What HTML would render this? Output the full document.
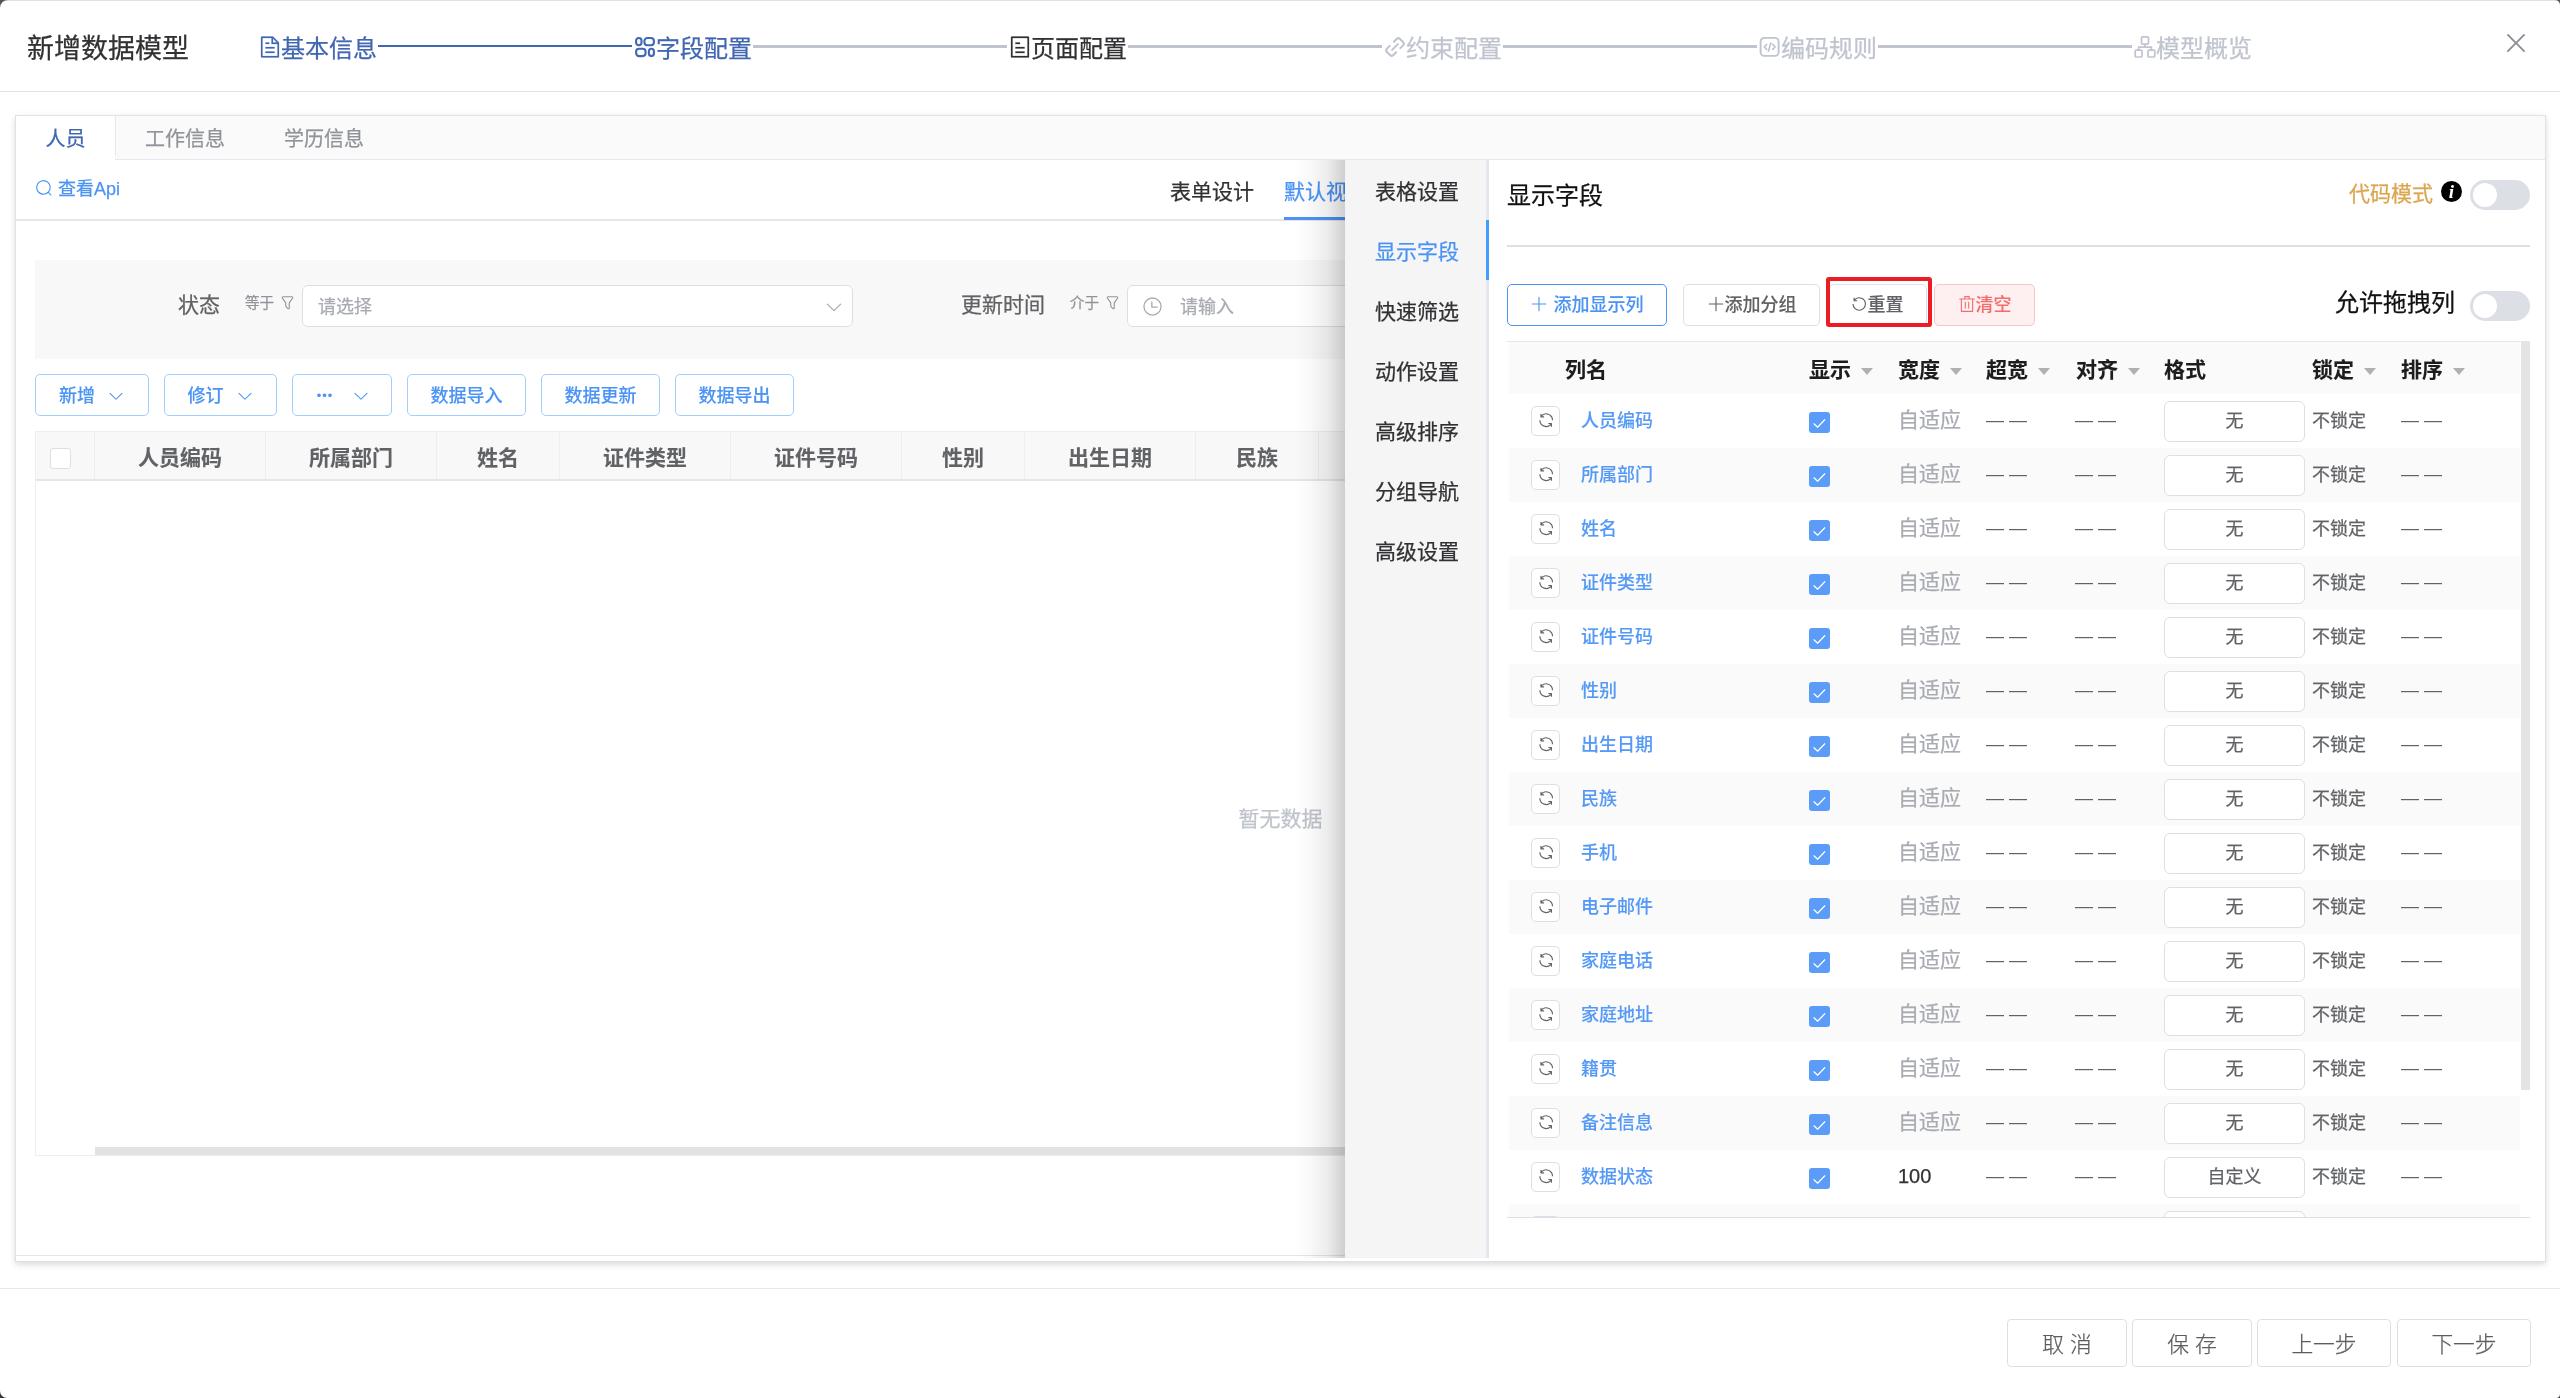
<!DOCTYPE html>
<html lang="zh-CN">
<head>
<meta charset="utf-8">
<title>新增数据模型</title>
<style>
*{box-sizing:border-box;margin:0;padding:0}
html,body{width:2560px;height:1398px;overflow:hidden;background:#fff}
body{-webkit-text-stroke:.25px;font-family:"Liberation Sans","Noto Sans CJK SC",sans-serif;color:#303133;position:relative;font-size:21px}
.abs{position:absolute}
svg{display:block;overflow:visible}
.nw{white-space:nowrap}
/* window chrome */
#topbar{left:0;top:0;width:2560px;height:1px;background:#dfe1ec}
/* header */
#hdr{left:0;top:2px;width:2560px;height:90px;border-bottom:1px solid #e2e2e4}
#title{left:27px;top:29px;font-size:27px;line-height:40px;color:#303133}
.step{top:29px;height:40px;line-height:40px;font-size:24px}
.step svg{position:absolute;left:.5px;top:6px}
.step span{position:absolute;left:24px;top:0}
.s-done{color:#4166b2}
.s-cur{color:#303133}
.s-wait{color:#c0c4cf}
.sline{height:3px;top:45px;width:254px}
/* card */
#card{left:15px;top:115px;width:2531px;height:1147px;border:1px solid #dfe1e8;background:#fff;box-shadow:0 3px 6px 0 rgba(0,0,0,.12),0 0 9px 0 rgba(0,0,0,.04);overflow:hidden}
#tabhdr{left:0;top:0;width:2529px;height:44px;background:#fafafa;border-bottom:1px solid #e4e7ed}
.tab{top:0;height:43px;line-height:46px;font-size:20px;color:#909399}
#tab1{left:0;width:100px;background:#fff;border-right:1px solid #e4e7ed;color:#4166b2;text-align:center;height:40px}
#tab1b{left:0;top:40px;width:99px;height:4px;background:#fff}
/* left pane (coordinates relative to card inner: body x-16, y-116) */
#api{left:42px;top:59px;font-size:18px;line-height:28px;color:#4b93f5}
#subtabs-line{left:0;top:103px;width:2529px;height:2px;background:#e9e6e6}
.stab{top:54px;height:44px;line-height:44px;font-size:21px;color:#303133}
#filter{left:19px;top:144px;width:2491px;height:99px;background:#f8f8f8}
.flabel{font-size:21px;line-height:30px;color:#606266}
.fop{font-size:14.5px;line-height:22px;color:#909399}
.finput{height:42px;border:1px solid #dcdfe6;border-radius:6px;background:#fff;font-size:18px;line-height:43px;color:#a8abb2}
.btn{-webkit-text-stroke:.1px;top:258px;height:42px;border:1px solid #a0cfff;border-radius:5px;background:#fff;color:#4b93f5;font-size:18px;font-weight:500;line-height:42px;text-align:center}
#ltable{left:19px;top:315px;width:2491px;height:725px;border:1px solid #ebeef5;background:#fff}
#lthead{left:0;top:0;width:2489px;height:49px;background:#f8f8f9;border-bottom:2px solid #e6e6e6}
.th{-webkit-text-stroke:.1px;top:0;height:47px;line-height:51px;font-size:21px;font-weight:700;color:#606266;text-align:center;border-right:1px solid #ebeef5}
#lcheck{left:14px;top:16px;width:21px;height:21px;border:1px solid #dcdfe6;border-radius:3px;background:#fff}
#empty{left:0;top:372px;width:2489px;text-align:center;font-size:21px;line-height:30px;color:#c0c4cc}
#hscroll{left:59px;top:715px;width:2430px;height:8px;background:#e2e2e2}
/* drawer */
#shadow{left:1279px;top:44px;width:50px;height:1098px;background:linear-gradient(to right,rgba(0,0,0,0),rgba(0,0,0,.025) 30%,rgba(0,0,0,.075) 65%,rgba(0,0,0,.19))}
#drawer{left:1329px;top:44px;width:1200px;height:1098px;background:#fff}
#nav{left:0;top:0;width:141px;height:1098px;background:#f5f5f5}
#navline{left:141px;top:0;width:3px;height:1098px;background:#e4e7ed}
#navact{left:141px;top:60px;width:3px;height:60px;background:#409eff}
.nitem{left:30px;height:60px;line-height:61px;font-size:21px;color:#303133}
/* drawer content: coordinates relative to drawer (body x-1345, y-160) */
#dtitle{left:162px;top:18px;font-size:24px;line-height:36px;color:#111}
#codemode{left:1004px;top:18px;font-size:21px;line-height:32px;color:#dca550}
.sw{width:60px;height:30px;border-radius:15px;background:#dcdfe6}
.sw i{position:absolute;left:3px;top:3px;width:24px;height:24px;border-radius:12px;background:#fff}
#dline{left:162px;top:85px;width:1023px;height:2px;background:#dcdfe6}
.dbtn{-webkit-text-stroke:.1px;top:124px;height:42px;border-radius:5px;font-size:18px;font-weight:500;line-height:41px;text-align:center;border:1px solid #dcdfe6;color:#606266;background:#fff}
#allow{left:990px;top:125px;font-size:24px;line-height:36px;color:#111}
#list{left:162px;top:181px;width:1023px;height:877px;border-top:1px solid #e4e7ed;border-bottom:1px solid #dcdfe6;overflow:hidden}
#lhead{left:2px;top:0;width:1011px;height:52px;background:#fafafa}
.lh{top:0;height:52px;line-height:56px;font-size:21px;font-weight:700;color:#1d1d1f;-webkit-text-stroke:.1px}
.caret{position:absolute;width:0;height:0;border-left:6.5px solid transparent;border-right:6.5px solid transparent;border-top:7px solid #b0b0b3;top:26px}
.row{left:2px;width:1011px;height:54px}
.row.odd{background:#fafafa}
.rbtn{left:22px;top:12px;width:29px;height:30px;border:1px solid #dcdfe6;border-radius:5px;background:#fff}
.rname{-webkit-text-stroke:.1px;left:72px;top:0;line-height:55px;font-size:18px;color:#5599f6;font-weight:500}
.rchk{left:300px;top:18px;width:21px;height:21px;border-radius:3px;background:#5b9cf8}
.rw{left:389px;top:0;line-height:52px;font-size:21px;color:#a8abb2}
.rd{-webkit-text-stroke:0;top:0;line-height:52px;font-size:18px;letter-spacing:5px;color:#606266}
.rfmt{left:655px;top:7px;width:141px;height:41px;border:1px solid #dcdfe6;border-radius:6px;background:#fff;text-align:center;line-height:39px;font-size:18px;color:#606266}
.rlock{left:803px;top:0;line-height:55px;font-size:18px;color:#606266}
#vscroll{left:1014px;top:0;width:9px;height:748px;background:#e4e4e4}
/* footer */
#fline{left:0;top:1288px;width:2560px;height:1px;background:#e6e8ee}
.fbtn{top:1319px;height:48px;border:1px solid #dcdfe6;border-radius:4px;background:#fff;color:#5c5e62;font-size:21.75px;font-weight:300;line-height:50px;text-align:center}
#lpbottom{left:0;top:1139px;width:1329px;height:1px;background:#e6e6e6}
#wrap{left:0;top:0;width:2560px;height:1398px;will-change:transform}
</style>
</head>
<body>
<div id="wrap" class="abs">
<div id="topbar" class="abs"></div>
<div id="hdr" class="abs"></div>
<div id="title" class="abs nw">新增数据模型</div>
<div class="abs step nw s-done" style="left:257px;width:120px"><svg class="" style="" width="24" height="24" viewBox="0 0 1024 1024"><path fill="currentColor" stroke="currentColor" stroke-width="10" d="M832 384H576V128H192v768h640zm-26.496-64L640 154.496V320zM160 64h480l256 256v608a32 32 0 0 1-32 32H160a32 32 0 0 1-32-32V96a32 32 0 0 1 32-32m160 448h384v64H320zm0-192h160v64H320zm0 384h384v64H320z"/></svg><span>基本信息</span></div>
<div class="abs sline" style="left:378px;background:#4166b2;height:2px"></div>
<div class="abs step nw s-done" style="left:632px;width:120px"><svg width="24" height="24" viewBox="0 0 24 24" fill="none" stroke="currentColor" stroke-width="2.1"><rect x="3.1" y="3" width="5.4" height="7.2" rx="2.6"/><rect x="11.4" y="3" width="9.5" height="7.2" rx="3"/><rect x="3.1" y="13.7" width="9.5" height="7.4" rx="3"/><rect x="15.9" y="13.7" width="5" height="7.4" rx="2.5"/></svg><span>字段配置</span></div>
<div class="abs sline" style="left:753px;background:#c0c4cf"></div>
<div class="abs step nw s-cur" style="left:1007px;width:120px"><svg class="" style="" width="24" height="24" viewBox="0 0 1024 1024"><path fill="currentColor" stroke="currentColor" stroke-width="10" d="M192 128v768h640V128zm-32-64h704a32 32 0 0 1 32 32v832a32 32 0 0 1-32 32H160a32 32 0 0 1-32-32V96a32 32 0 0 1 32-32m160 448h384v64H320zm0-192h192v64H320zm0 384h384v64H320z"/></svg><span>页面配置</span></div>
<div class="abs sline" style="left:1128px;background:#c0c4cf"></div>
<div class="abs step nw s-wait" style="left:1382px;width:120px"><svg width="24" height="24" viewBox="0 0 24 24" fill="none" stroke="currentColor" stroke-width="1.7" stroke-linecap="round" stroke-linejoin="round"><g transform="translate(12 12) scale(1.2) rotate(-45) translate(-12 -12)"><path d="M9.5 8.2H6.3a2 2 0 0 0-2 2v3.6a2 2 0 0 0 2 2h3.2"/><path d="M14.5 8.2h3.2a2 2 0 0 1 2 2v3.6a2 2 0 0 1-2 2h-3.2"/><path d="M8.6 12h6.8"/></g></svg><span>约束配置</span></div>
<div class="abs sline" style="left:1503px;background:#c0c4cf"></div>
<div class="abs step nw s-wait" style="left:1757px;width:120px"><svg width="24" height="24" viewBox="0 0 24 24" fill="none" stroke="currentColor" stroke-width="1.9" stroke-linecap="round" stroke-linejoin="round"><rect x="2.6" y="2.9" width="18" height="18" rx="3.6"/><path d="M8.6 9.4 6.3 12l2.3 2.4M14.8 9.4l2.3 2.6-2.3 2.4M12.8 8 10.4 16.2" stroke-width="1.7"/></svg><span>编码规则</span></div>
<div class="abs sline" style="left:1878px;background:#c0c4cf"></div>
<div class="abs step nw s-wait" style="left:2132px;width:120px"><svg width="24" height="24" viewBox="0 0 24 24" fill="none" stroke="currentColor" stroke-width="1.7" stroke-linejoin="round"><rect x="8.5" y="1.9" width="7" height="7.2" rx="1"/><rect x="2.2" y="15.2" width="6.8" height="6.8" rx="1"/><rect x="15" y="15.2" width="6.8" height="6.8" rx="1"/><path d="M12 9.1v3M5.6 15.2v-3.1h12.8v3.1"/></svg><span>模型概览</span></div>
<div class="abs" style="left:2501px;top:28px;color:#8c8f96"><svg class="" style="" width="30" height="30" viewBox="0 0 1024 1024"><path fill="currentColor" d="M764.288 214.592 512 466.88 259.712 214.592a31.936 31.936 0 0 0-45.12 45.12L466.752 512 214.528 764.224a31.936 31.936 0 1 0 45.12 45.184L512 557.184l252.288 252.288a31.936 31.936 0 0 0 45.12-45.12L557.12 512.064l252.288-252.352a31.936 31.936 0 1 0-45.12-45.184z"/></svg></div>
<div id="card" class="abs">
<div id="tabhdr" class="abs"></div>
<div id="tab1" class="abs tab nw">人员</div><div id="tab1b" class="abs"></div>
<div class="abs tab nw" style="left:129px">工作信息</div>
<div class="abs tab nw" style="left:268px">学历信息</div>
<div id="api" class="abs nw">查看Api</div>
<div class="abs" style="left:19px;top:63px;color:#4b93f5"><svg class="" style="" width="18" height="18" viewBox="0 0 1024 1024"><path fill="currentColor" d="M795.904 750.72l124.992 124.928a32 32 0 0 1-45.248 45.248L750.656 795.904a416 416 0 1 1 45.248-45.248zM480 832a352 352 0 1 0 0-704 352 352 0 0 0 0 704z"/></svg></div>
<div id="subtabs-line" class="abs"></div>
<div class="abs stab nw" style="left:1154px">表单设计</div>
<div class="abs stab nw" style="left:1268px;color:#4b93f5">默认视图</div>
<div class="abs" style="left:1268px;top:101px;width:90px;height:3px;background:#4b93f5"></div>
<div id="filter" class="abs"></div>
<div class="abs flabel nw" style="left:162px;top:174px">状态</div>
<div class="abs fop nw" style="left:229px;top:176px">等于</div><div class="abs" style="left:264.5px;top:179px;color:#909399"><svg width="13" height="15" viewBox="0 0 14 16" fill="none" stroke="currentColor" stroke-width="1.2" stroke-linejoin="round"><path d="M2.2 1.8h9.6a.9.9 0 0 1 .75 1.4L8.9 8.4v5.6a.8.8 0 0 1-1.3.6L5.6 12.6a1.3 1.3 0 0 1-.5-1V8.4L1.45 3.2A.9.9 0 0 1 2.2 1.8z"/></svg></div>
<div class="abs finput nw" style="left:286px;top:169px;width:551px;padding-left:15px">请选择<span class="abs" style="right:8px;top:11px;color:#a8abb2"><svg class="" style="" width="20" height="20" viewBox="0 0 1024 1024"><path fill="currentColor" d="M831.872 340.864 512 652.672 192.128 340.864a30.592 30.592 0 0 0-42.752 0 29.12 29.12 0 0 0 0 41.6L489.664 714.24a32 32 0 0 0 44.672 0l340.288-331.712a29.12 29.12 0 0 0 0-41.728 30.592 30.592 0 0 0-42.752 0z"/></svg></span></div>
<div class="abs flabel nw" style="left:945px;top:174px">更新时间</div>
<div class="abs fop nw" style="left:1054px;top:176px">介于</div><div class="abs" style="left:1089.5px;top:179px;color:#909399"><svg width="13" height="15" viewBox="0 0 14 16" fill="none" stroke="currentColor" stroke-width="1.2" stroke-linejoin="round"><path d="M2.2 1.8h9.6a.9.9 0 0 1 .75 1.4L8.9 8.4v5.6a.8.8 0 0 1-1.3.6L5.6 12.6a1.3 1.3 0 0 1-.5-1V8.4L1.45 3.2A.9.9 0 0 1 2.2 1.8z"/></svg></div>
<div class="abs finput nw" style="left:1111px;top:169px;width:551px;padding-left:52px">请输入<span class="abs" style="left:14px;top:10px;color:#a8abb2"><svg class="" style="" width="21" height="21" viewBox="0 0 1024 1024"><path fill="currentColor" d="M512 896a384 384 0 1 0 0-768 384 384 0 0 0 0 768m0 64a448 448 0 1 1 0-896 448 448 0 0 1 0 896M480 256a32 32 0 0 1 32 32v256a32 32 0 0 1-64 0V288a32 32 0 0 1 32-32M480 512h256q32 0 32 32t-32 32H480q-32 0-32-32t32-32"/></svg></span></div>
<div class="abs btn nw" style="left:19px;width:114px">新增<svg class="" style="display:inline-block;vertical-align:-3px;margin-left:12px" width="18" height="18" viewBox="0 0 1024 1024"><path fill="currentColor" d="M831.872 340.864 512 652.672 192.128 340.864a30.592 30.592 0 0 0-42.752 0 29.12 29.12 0 0 0 0 41.6L489.664 714.24a32 32 0 0 0 44.672 0l340.288-331.712a29.12 29.12 0 0 0 0-41.728 30.592 30.592 0 0 0-42.752 0z"/></svg></div>
<div class="abs btn nw" style="left:148px;width:113px">修订<svg class="" style="display:inline-block;vertical-align:-3px;margin-left:12px" width="18" height="18" viewBox="0 0 1024 1024"><path fill="currentColor" d="M831.872 340.864 512 652.672 192.128 340.864a30.592 30.592 0 0 0-42.752 0 29.12 29.12 0 0 0 0 41.6L489.664 714.24a32 32 0 0 0 44.672 0l340.288-331.712a29.12 29.12 0 0 0 0-41.728 30.592 30.592 0 0 0-42.752 0z"/></svg></div>
<div class="abs btn nw" style="left:276px;width:100px"><span style="font-size:13px;letter-spacing:1px;margin-left:3px;margin-right:7px;position:relative;top:-2px">•••</span><svg class="" style="display:inline-block;vertical-align:-3px;margin-left:12px" width="18" height="18" viewBox="0 0 1024 1024"><path fill="currentColor" d="M831.872 340.864 512 652.672 192.128 340.864a30.592 30.592 0 0 0-42.752 0 29.12 29.12 0 0 0 0 41.6L489.664 714.24a32 32 0 0 0 44.672 0l340.288-331.712a29.12 29.12 0 0 0 0-41.728 30.592 30.592 0 0 0-42.752 0z"/></svg></div>
<div class="abs btn nw" style="left:391px;width:119px">数据导入</div>
<div class="abs btn nw" style="left:525px;width:119px">数据更新</div>
<div class="abs btn nw" style="left:659px;width:119px">数据导出</div>
<div id="ltable" class="abs"><div id="lthead" class="abs"></div>
<div class="abs th nw" style="left:0px;width:59px"></div><div class="abs th nw" style="left:59px;width:171px">人员编码</div><div class="abs th nw" style="left:230px;width:171px">所属部门</div><div class="abs th nw" style="left:401px;width:123px">姓名</div><div class="abs th nw" style="left:524px;width:171px">证件类型</div><div class="abs th nw" style="left:695px;width:171px">证件号码</div><div class="abs th nw" style="left:866px;width:123px">性别</div><div class="abs th nw" style="left:989px;width:171px">出生日期</div><div class="abs th nw" style="left:1160px;width:123px">民族</div><div class="abs th nw" style="left:1283px;width:171px">手机</div>
<div id="lcheck" class="abs"></div>
<div id="empty" class="abs">暂无数据</div>
<div id="hscroll" class="abs"></div>
</div>
<div id="lpbottom" class="abs"></div><div id="shadow" class="abs"></div>
<div id="drawer" class="abs">
<div id="nav" class="abs"></div><div id="navline" class="abs"></div><div id="navact" class="abs"></div>
<div class="abs nitem nw" style="top:1px;">表格设置</div>
<div class="abs nitem nw" style="top:61px;color:#4b93f5;">显示字段</div>
<div class="abs nitem nw" style="top:121px;">快速筛选</div>
<div class="abs nitem nw" style="top:181px;">动作设置</div>
<div class="abs nitem nw" style="top:241px;">高级排序</div>
<div class="abs nitem nw" style="top:301px;">分组导航</div>
<div class="abs nitem nw" style="top:361px;">高级设置</div>
<div id="dtitle" class="abs nw">显示字段</div>
<div id="codemode" class="abs nw">代码模式</div>
<svg class="abs" style="left:1096px;top:21px" width="21" height="21" viewBox="0 0 21 21"><circle cx="10.5" cy="10.5" r="10.5" fill="#000"/><text x="10.4" y="16.6" text-anchor="middle" font-family="Liberation Serif,serif" font-style="italic" font-weight="700" font-size="19" fill="#fff" style="-webkit-text-stroke:0">i</text></svg>
<div class="abs sw" style="left:1125px;top:20px"><i></i></div>
<div id="dline" class="abs"></div>
<div class="abs dbtn nw" style="left:162px;width:160px;border-color:#4b93f5;color:#4b93f5"><svg class="" style="display:inline-block;vertical-align:-2px" width="18" height="18" viewBox="0 0 1024 1024"><path fill="currentColor" d="M480 480V128a32 32 0 0 1 64 0v352h352a32 32 0 1 1 0 64H544v352a32 32 0 1 1-64 0V544H128a32 32 0 0 1 0-64z"/></svg> 添加显示列</div>
<div class="abs dbtn nw" style="left:338px;width:137px"><svg class="" style="display:inline-block;vertical-align:-2px" width="18" height="18" viewBox="0 0 1024 1024"><path fill="currentColor" d="M480 480V128a32 32 0 0 1 64 0v352h352a32 32 0 1 1 0 64H544v352a32 32 0 1 1-64 0V544H128a32 32 0 0 1 0-64z"/></svg>添加分组</div>
<div class="abs dbtn nw" style="left:484px;width:98px;padding-right:3px"><svg class="" style="display:inline-block;vertical-align:-2px" width="18" height="18" viewBox="0 0 1024 1024"><path fill="currentColor" d="M289.088 296.704h92.992a32 32 0 0 1 0 64H232.96a32 32 0 0 1-32-32V179.712a32 32 0 0 1 64 0v50.56a384 384 0 0 1 643.84 282.88 384 384 0 0 1-383.936 384 384 384 0 0 1-384-384h64a320 320 0 1 0 640 0 320 320 0 0 0-555.712-216.448z"/></svg>重置</div>
<div class="abs" style="left:481px;top:117px;width:106px;height:50px;border:4px solid #ec1c24;border-radius:3px"></div>
<div class="abs dbtn nw" style="left:589px;width:101px;background:#fef0f0;border-color:#fbc4c4;color:#f56c6c"><svg class="" style="display:inline-block;vertical-align:-2px" width="18" height="18" viewBox="0 0 1024 1024"><path fill="currentColor" d="M160 256H96a32 32 0 0 1 0-64h256V95.936a32 32 0 0 1 32-32h256a32 32 0 0 1 32 32V192h256a32 32 0 1 1 0 64h-64v672a32 32 0 0 1-32 32H192a32 32 0 0 1-32-32zm448-64v-64H416v64zM224 896h576V256H224zm192-128a32 32 0 0 1-32-32V416a32 32 0 0 1 64 0v320a32 32 0 0 1-32 32m192 0a32 32 0 0 1-32-32V416a32 32 0 0 1 64 0v320a32 32 0 0 1-32 32"/></svg>清空</div>
<div id="allow" class="abs nw">允许拖拽列</div>
<div class="abs sw" style="left:1125px;top:131px"><i></i></div>
<div id="list" class="abs"><div id="lhead" class="abs"></div>
<div class="abs lh nw" style="left:58px">列名</div><div class="abs lh nw" style="left:302px">显示</div><i class="caret" style="left:354px"></i><div class="abs lh nw" style="left:391px">宽度</div><i class="caret" style="left:443px"></i><div class="abs lh nw" style="left:479px">超宽</div><i class="caret" style="left:531px"></i><div class="abs lh nw" style="left:569px">对齐</div><i class="caret" style="left:621px"></i><div class="abs lh nw" style="left:657px">格式</div><div class="abs lh nw" style="left:805px">锁定</div><i class="caret" style="left:857px"></i><div class="abs lh nw" style="left:894px">排序</div><i class="caret" style="left:946px"></i>
<div class="abs row" style="top:52px"><div class="abs rbtn"><span class="abs" style="left:4.6px;top:4.2px;color:#606266"><svg class="" style="" width="18.4" height="18.4" viewBox="0 0 1024 1024"><path fill="currentColor" d="M771.776 794.88A384 384 0 0 1 128 512h64a320 320 0 0 0 555.712 216.448H654.72a32 32 0 1 1 0-64h149.056a32 32 0 0 1 32 32v148.928a32 32 0 1 1-64 0v-50.56zM276.288 295.616h92.992a32 32 0 0 1 0 64H220.16a32 32 0 0 1-32-32V178.56a32 32 0 0 1 64 0v50.56A384 384 0 0 1 896.128 512h-64a320 320 0 0 0-555.776-216.384z"/></svg></span></div><div class="abs rname nw">人员编码</div><div class="abs rchk"><svg width="21" height="21" viewBox="0 0 21 21" fill="none" stroke="#fff" stroke-width="1.25" stroke-linecap="round" stroke-linejoin="round"><path d="M5 11.8 8.6 15.2 15.8 7.8"/></svg></div><div class="abs rw nw">自适应</div><div class="abs rd nw" style="left:477px">——</div><div class="abs rd nw" style="left:566px">——</div><div class="abs rfmt nw">无</div><div class="abs rlock nw">不锁定</div><div class="abs rd nw" style="left:892px">——</div></div>
<div class="abs row odd" style="top:106px"><div class="abs rbtn"><span class="abs" style="left:4.6px;top:4.2px;color:#606266"><svg class="" style="" width="18.4" height="18.4" viewBox="0 0 1024 1024"><path fill="currentColor" d="M771.776 794.88A384 384 0 0 1 128 512h64a320 320 0 0 0 555.712 216.448H654.72a32 32 0 1 1 0-64h149.056a32 32 0 0 1 32 32v148.928a32 32 0 1 1-64 0v-50.56zM276.288 295.616h92.992a32 32 0 0 1 0 64H220.16a32 32 0 0 1-32-32V178.56a32 32 0 0 1 64 0v50.56A384 384 0 0 1 896.128 512h-64a320 320 0 0 0-555.776-216.384z"/></svg></span></div><div class="abs rname nw">所属部门</div><div class="abs rchk"><svg width="21" height="21" viewBox="0 0 21 21" fill="none" stroke="#fff" stroke-width="1.25" stroke-linecap="round" stroke-linejoin="round"><path d="M5 11.8 8.6 15.2 15.8 7.8"/></svg></div><div class="abs rw nw">自适应</div><div class="abs rd nw" style="left:477px">——</div><div class="abs rd nw" style="left:566px">——</div><div class="abs rfmt nw">无</div><div class="abs rlock nw">不锁定</div><div class="abs rd nw" style="left:892px">——</div></div>
<div class="abs row" style="top:160px"><div class="abs rbtn"><span class="abs" style="left:4.6px;top:4.2px;color:#606266"><svg class="" style="" width="18.4" height="18.4" viewBox="0 0 1024 1024"><path fill="currentColor" d="M771.776 794.88A384 384 0 0 1 128 512h64a320 320 0 0 0 555.712 216.448H654.72a32 32 0 1 1 0-64h149.056a32 32 0 0 1 32 32v148.928a32 32 0 1 1-64 0v-50.56zM276.288 295.616h92.992a32 32 0 0 1 0 64H220.16a32 32 0 0 1-32-32V178.56a32 32 0 0 1 64 0v50.56A384 384 0 0 1 896.128 512h-64a320 320 0 0 0-555.776-216.384z"/></svg></span></div><div class="abs rname nw">姓名</div><div class="abs rchk"><svg width="21" height="21" viewBox="0 0 21 21" fill="none" stroke="#fff" stroke-width="1.25" stroke-linecap="round" stroke-linejoin="round"><path d="M5 11.8 8.6 15.2 15.8 7.8"/></svg></div><div class="abs rw nw">自适应</div><div class="abs rd nw" style="left:477px">——</div><div class="abs rd nw" style="left:566px">——</div><div class="abs rfmt nw">无</div><div class="abs rlock nw">不锁定</div><div class="abs rd nw" style="left:892px">——</div></div>
<div class="abs row odd" style="top:214px"><div class="abs rbtn"><span class="abs" style="left:4.6px;top:4.2px;color:#606266"><svg class="" style="" width="18.4" height="18.4" viewBox="0 0 1024 1024"><path fill="currentColor" d="M771.776 794.88A384 384 0 0 1 128 512h64a320 320 0 0 0 555.712 216.448H654.72a32 32 0 1 1 0-64h149.056a32 32 0 0 1 32 32v148.928a32 32 0 1 1-64 0v-50.56zM276.288 295.616h92.992a32 32 0 0 1 0 64H220.16a32 32 0 0 1-32-32V178.56a32 32 0 0 1 64 0v50.56A384 384 0 0 1 896.128 512h-64a320 320 0 0 0-555.776-216.384z"/></svg></span></div><div class="abs rname nw">证件类型</div><div class="abs rchk"><svg width="21" height="21" viewBox="0 0 21 21" fill="none" stroke="#fff" stroke-width="1.25" stroke-linecap="round" stroke-linejoin="round"><path d="M5 11.8 8.6 15.2 15.8 7.8"/></svg></div><div class="abs rw nw">自适应</div><div class="abs rd nw" style="left:477px">——</div><div class="abs rd nw" style="left:566px">——</div><div class="abs rfmt nw">无</div><div class="abs rlock nw">不锁定</div><div class="abs rd nw" style="left:892px">——</div></div>
<div class="abs row" style="top:268px"><div class="abs rbtn"><span class="abs" style="left:4.6px;top:4.2px;color:#606266"><svg class="" style="" width="18.4" height="18.4" viewBox="0 0 1024 1024"><path fill="currentColor" d="M771.776 794.88A384 384 0 0 1 128 512h64a320 320 0 0 0 555.712 216.448H654.72a32 32 0 1 1 0-64h149.056a32 32 0 0 1 32 32v148.928a32 32 0 1 1-64 0v-50.56zM276.288 295.616h92.992a32 32 0 0 1 0 64H220.16a32 32 0 0 1-32-32V178.56a32 32 0 0 1 64 0v50.56A384 384 0 0 1 896.128 512h-64a320 320 0 0 0-555.776-216.384z"/></svg></span></div><div class="abs rname nw">证件号码</div><div class="abs rchk"><svg width="21" height="21" viewBox="0 0 21 21" fill="none" stroke="#fff" stroke-width="1.25" stroke-linecap="round" stroke-linejoin="round"><path d="M5 11.8 8.6 15.2 15.8 7.8"/></svg></div><div class="abs rw nw">自适应</div><div class="abs rd nw" style="left:477px">——</div><div class="abs rd nw" style="left:566px">——</div><div class="abs rfmt nw">无</div><div class="abs rlock nw">不锁定</div><div class="abs rd nw" style="left:892px">——</div></div>
<div class="abs row odd" style="top:322px"><div class="abs rbtn"><span class="abs" style="left:4.6px;top:4.2px;color:#606266"><svg class="" style="" width="18.4" height="18.4" viewBox="0 0 1024 1024"><path fill="currentColor" d="M771.776 794.88A384 384 0 0 1 128 512h64a320 320 0 0 0 555.712 216.448H654.72a32 32 0 1 1 0-64h149.056a32 32 0 0 1 32 32v148.928a32 32 0 1 1-64 0v-50.56zM276.288 295.616h92.992a32 32 0 0 1 0 64H220.16a32 32 0 0 1-32-32V178.56a32 32 0 0 1 64 0v50.56A384 384 0 0 1 896.128 512h-64a320 320 0 0 0-555.776-216.384z"/></svg></span></div><div class="abs rname nw">性别</div><div class="abs rchk"><svg width="21" height="21" viewBox="0 0 21 21" fill="none" stroke="#fff" stroke-width="1.25" stroke-linecap="round" stroke-linejoin="round"><path d="M5 11.8 8.6 15.2 15.8 7.8"/></svg></div><div class="abs rw nw">自适应</div><div class="abs rd nw" style="left:477px">——</div><div class="abs rd nw" style="left:566px">——</div><div class="abs rfmt nw">无</div><div class="abs rlock nw">不锁定</div><div class="abs rd nw" style="left:892px">——</div></div>
<div class="abs row" style="top:376px"><div class="abs rbtn"><span class="abs" style="left:4.6px;top:4.2px;color:#606266"><svg class="" style="" width="18.4" height="18.4" viewBox="0 0 1024 1024"><path fill="currentColor" d="M771.776 794.88A384 384 0 0 1 128 512h64a320 320 0 0 0 555.712 216.448H654.72a32 32 0 1 1 0-64h149.056a32 32 0 0 1 32 32v148.928a32 32 0 1 1-64 0v-50.56zM276.288 295.616h92.992a32 32 0 0 1 0 64H220.16a32 32 0 0 1-32-32V178.56a32 32 0 0 1 64 0v50.56A384 384 0 0 1 896.128 512h-64a320 320 0 0 0-555.776-216.384z"/></svg></span></div><div class="abs rname nw">出生日期</div><div class="abs rchk"><svg width="21" height="21" viewBox="0 0 21 21" fill="none" stroke="#fff" stroke-width="1.25" stroke-linecap="round" stroke-linejoin="round"><path d="M5 11.8 8.6 15.2 15.8 7.8"/></svg></div><div class="abs rw nw">自适应</div><div class="abs rd nw" style="left:477px">——</div><div class="abs rd nw" style="left:566px">——</div><div class="abs rfmt nw">无</div><div class="abs rlock nw">不锁定</div><div class="abs rd nw" style="left:892px">——</div></div>
<div class="abs row odd" style="top:430px"><div class="abs rbtn"><span class="abs" style="left:4.6px;top:4.2px;color:#606266"><svg class="" style="" width="18.4" height="18.4" viewBox="0 0 1024 1024"><path fill="currentColor" d="M771.776 794.88A384 384 0 0 1 128 512h64a320 320 0 0 0 555.712 216.448H654.72a32 32 0 1 1 0-64h149.056a32 32 0 0 1 32 32v148.928a32 32 0 1 1-64 0v-50.56zM276.288 295.616h92.992a32 32 0 0 1 0 64H220.16a32 32 0 0 1-32-32V178.56a32 32 0 0 1 64 0v50.56A384 384 0 0 1 896.128 512h-64a320 320 0 0 0-555.776-216.384z"/></svg></span></div><div class="abs rname nw">民族</div><div class="abs rchk"><svg width="21" height="21" viewBox="0 0 21 21" fill="none" stroke="#fff" stroke-width="1.25" stroke-linecap="round" stroke-linejoin="round"><path d="M5 11.8 8.6 15.2 15.8 7.8"/></svg></div><div class="abs rw nw">自适应</div><div class="abs rd nw" style="left:477px">——</div><div class="abs rd nw" style="left:566px">——</div><div class="abs rfmt nw">无</div><div class="abs rlock nw">不锁定</div><div class="abs rd nw" style="left:892px">——</div></div>
<div class="abs row" style="top:484px"><div class="abs rbtn"><span class="abs" style="left:4.6px;top:4.2px;color:#606266"><svg class="" style="" width="18.4" height="18.4" viewBox="0 0 1024 1024"><path fill="currentColor" d="M771.776 794.88A384 384 0 0 1 128 512h64a320 320 0 0 0 555.712 216.448H654.72a32 32 0 1 1 0-64h149.056a32 32 0 0 1 32 32v148.928a32 32 0 1 1-64 0v-50.56zM276.288 295.616h92.992a32 32 0 0 1 0 64H220.16a32 32 0 0 1-32-32V178.56a32 32 0 0 1 64 0v50.56A384 384 0 0 1 896.128 512h-64a320 320 0 0 0-555.776-216.384z"/></svg></span></div><div class="abs rname nw">手机</div><div class="abs rchk"><svg width="21" height="21" viewBox="0 0 21 21" fill="none" stroke="#fff" stroke-width="1.25" stroke-linecap="round" stroke-linejoin="round"><path d="M5 11.8 8.6 15.2 15.8 7.8"/></svg></div><div class="abs rw nw">自适应</div><div class="abs rd nw" style="left:477px">——</div><div class="abs rd nw" style="left:566px">——</div><div class="abs rfmt nw">无</div><div class="abs rlock nw">不锁定</div><div class="abs rd nw" style="left:892px">——</div></div>
<div class="abs row odd" style="top:538px"><div class="abs rbtn"><span class="abs" style="left:4.6px;top:4.2px;color:#606266"><svg class="" style="" width="18.4" height="18.4" viewBox="0 0 1024 1024"><path fill="currentColor" d="M771.776 794.88A384 384 0 0 1 128 512h64a320 320 0 0 0 555.712 216.448H654.72a32 32 0 1 1 0-64h149.056a32 32 0 0 1 32 32v148.928a32 32 0 1 1-64 0v-50.56zM276.288 295.616h92.992a32 32 0 0 1 0 64H220.16a32 32 0 0 1-32-32V178.56a32 32 0 0 1 64 0v50.56A384 384 0 0 1 896.128 512h-64a320 320 0 0 0-555.776-216.384z"/></svg></span></div><div class="abs rname nw">电子邮件</div><div class="abs rchk"><svg width="21" height="21" viewBox="0 0 21 21" fill="none" stroke="#fff" stroke-width="1.25" stroke-linecap="round" stroke-linejoin="round"><path d="M5 11.8 8.6 15.2 15.8 7.8"/></svg></div><div class="abs rw nw">自适应</div><div class="abs rd nw" style="left:477px">——</div><div class="abs rd nw" style="left:566px">——</div><div class="abs rfmt nw">无</div><div class="abs rlock nw">不锁定</div><div class="abs rd nw" style="left:892px">——</div></div>
<div class="abs row" style="top:592px"><div class="abs rbtn"><span class="abs" style="left:4.6px;top:4.2px;color:#606266"><svg class="" style="" width="18.4" height="18.4" viewBox="0 0 1024 1024"><path fill="currentColor" d="M771.776 794.88A384 384 0 0 1 128 512h64a320 320 0 0 0 555.712 216.448H654.72a32 32 0 1 1 0-64h149.056a32 32 0 0 1 32 32v148.928a32 32 0 1 1-64 0v-50.56zM276.288 295.616h92.992a32 32 0 0 1 0 64H220.16a32 32 0 0 1-32-32V178.56a32 32 0 0 1 64 0v50.56A384 384 0 0 1 896.128 512h-64a320 320 0 0 0-555.776-216.384z"/></svg></span></div><div class="abs rname nw">家庭电话</div><div class="abs rchk"><svg width="21" height="21" viewBox="0 0 21 21" fill="none" stroke="#fff" stroke-width="1.25" stroke-linecap="round" stroke-linejoin="round"><path d="M5 11.8 8.6 15.2 15.8 7.8"/></svg></div><div class="abs rw nw">自适应</div><div class="abs rd nw" style="left:477px">——</div><div class="abs rd nw" style="left:566px">——</div><div class="abs rfmt nw">无</div><div class="abs rlock nw">不锁定</div><div class="abs rd nw" style="left:892px">——</div></div>
<div class="abs row odd" style="top:646px"><div class="abs rbtn"><span class="abs" style="left:4.6px;top:4.2px;color:#606266"><svg class="" style="" width="18.4" height="18.4" viewBox="0 0 1024 1024"><path fill="currentColor" d="M771.776 794.88A384 384 0 0 1 128 512h64a320 320 0 0 0 555.712 216.448H654.72a32 32 0 1 1 0-64h149.056a32 32 0 0 1 32 32v148.928a32 32 0 1 1-64 0v-50.56zM276.288 295.616h92.992a32 32 0 0 1 0 64H220.16a32 32 0 0 1-32-32V178.56a32 32 0 0 1 64 0v50.56A384 384 0 0 1 896.128 512h-64a320 320 0 0 0-555.776-216.384z"/></svg></span></div><div class="abs rname nw">家庭地址</div><div class="abs rchk"><svg width="21" height="21" viewBox="0 0 21 21" fill="none" stroke="#fff" stroke-width="1.25" stroke-linecap="round" stroke-linejoin="round"><path d="M5 11.8 8.6 15.2 15.8 7.8"/></svg></div><div class="abs rw nw">自适应</div><div class="abs rd nw" style="left:477px">——</div><div class="abs rd nw" style="left:566px">——</div><div class="abs rfmt nw">无</div><div class="abs rlock nw">不锁定</div><div class="abs rd nw" style="left:892px">——</div></div>
<div class="abs row" style="top:700px"><div class="abs rbtn"><span class="abs" style="left:4.6px;top:4.2px;color:#606266"><svg class="" style="" width="18.4" height="18.4" viewBox="0 0 1024 1024"><path fill="currentColor" d="M771.776 794.88A384 384 0 0 1 128 512h64a320 320 0 0 0 555.712 216.448H654.72a32 32 0 1 1 0-64h149.056a32 32 0 0 1 32 32v148.928a32 32 0 1 1-64 0v-50.56zM276.288 295.616h92.992a32 32 0 0 1 0 64H220.16a32 32 0 0 1-32-32V178.56a32 32 0 0 1 64 0v50.56A384 384 0 0 1 896.128 512h-64a320 320 0 0 0-555.776-216.384z"/></svg></span></div><div class="abs rname nw">籍贯</div><div class="abs rchk"><svg width="21" height="21" viewBox="0 0 21 21" fill="none" stroke="#fff" stroke-width="1.25" stroke-linecap="round" stroke-linejoin="round"><path d="M5 11.8 8.6 15.2 15.8 7.8"/></svg></div><div class="abs rw nw">自适应</div><div class="abs rd nw" style="left:477px">——</div><div class="abs rd nw" style="left:566px">——</div><div class="abs rfmt nw">无</div><div class="abs rlock nw">不锁定</div><div class="abs rd nw" style="left:892px">——</div></div>
<div class="abs row odd" style="top:754px"><div class="abs rbtn"><span class="abs" style="left:4.6px;top:4.2px;color:#606266"><svg class="" style="" width="18.4" height="18.4" viewBox="0 0 1024 1024"><path fill="currentColor" d="M771.776 794.88A384 384 0 0 1 128 512h64a320 320 0 0 0 555.712 216.448H654.72a32 32 0 1 1 0-64h149.056a32 32 0 0 1 32 32v148.928a32 32 0 1 1-64 0v-50.56zM276.288 295.616h92.992a32 32 0 0 1 0 64H220.16a32 32 0 0 1-32-32V178.56a32 32 0 0 1 64 0v50.56A384 384 0 0 1 896.128 512h-64a320 320 0 0 0-555.776-216.384z"/></svg></span></div><div class="abs rname nw">备注信息</div><div class="abs rchk"><svg width="21" height="21" viewBox="0 0 21 21" fill="none" stroke="#fff" stroke-width="1.25" stroke-linecap="round" stroke-linejoin="round"><path d="M5 11.8 8.6 15.2 15.8 7.8"/></svg></div><div class="abs rw nw">自适应</div><div class="abs rd nw" style="left:477px">——</div><div class="abs rd nw" style="left:566px">——</div><div class="abs rfmt nw">无</div><div class="abs rlock nw">不锁定</div><div class="abs rd nw" style="left:892px">——</div></div>
<div class="abs row" style="top:808px"><div class="abs rbtn"><span class="abs" style="left:4.6px;top:4.2px;color:#606266"><svg class="" style="" width="18.4" height="18.4" viewBox="0 0 1024 1024"><path fill="currentColor" d="M771.776 794.88A384 384 0 0 1 128 512h64a320 320 0 0 0 555.712 216.448H654.72a32 32 0 1 1 0-64h149.056a32 32 0 0 1 32 32v148.928a32 32 0 1 1-64 0v-50.56zM276.288 295.616h92.992a32 32 0 0 1 0 64H220.16a32 32 0 0 1-32-32V178.56a32 32 0 0 1 64 0v50.56A384 384 0 0 1 896.128 512h-64a320 320 0 0 0-555.776-216.384z"/></svg></span></div><div class="abs rname nw">数据状态</div><div class="abs rchk"><svg width="21" height="21" viewBox="0 0 21 21" fill="none" stroke="#fff" stroke-width="1.25" stroke-linecap="round" stroke-linejoin="round"><path d="M5 11.8 8.6 15.2 15.8 7.8"/></svg></div><div class="abs rw nw" style="color:#303133;line-height:53px;font-size:20px">100</div><div class="abs rd nw" style="left:477px">——</div><div class="abs rd nw" style="left:566px">——</div><div class="abs rfmt nw">自定义</div><div class="abs rlock nw">不锁定</div><div class="abs rd nw" style="left:892px">——</div></div>
<div class="abs row odd" style="top:862px"><div class="abs rbtn"><span class="abs" style="left:4.6px;top:4.2px;color:#606266"><svg class="" style="" width="18.4" height="18.4" viewBox="0 0 1024 1024"><path fill="currentColor" d="M771.776 794.88A384 384 0 0 1 128 512h64a320 320 0 0 0 555.712 216.448H654.72a32 32 0 1 1 0-64h149.056a32 32 0 0 1 32 32v148.928a32 32 0 1 1-64 0v-50.56zM276.288 295.616h92.992a32 32 0 0 1 0 64H220.16a32 32 0 0 1-32-32V178.56a32 32 0 0 1 64 0v50.56A384 384 0 0 1 896.128 512h-64a320 320 0 0 0-555.776-216.384z"/></svg></span></div><div class="abs rname nw">创建时间</div><div class="abs rchk"><svg width="21" height="21" viewBox="0 0 21 21" fill="none" stroke="#fff" stroke-width="1.25" stroke-linecap="round" stroke-linejoin="round"><path d="M5 11.8 8.6 15.2 15.8 7.8"/></svg></div><div class="abs rw nw">自适应</div><div class="abs rd nw" style="left:477px">——</div><div class="abs rd nw" style="left:566px">——</div><div class="abs rfmt nw">无</div><div class="abs rlock nw">不锁定</div><div class="abs rd nw" style="left:892px">——</div></div>
<div id="vscroll" class="abs"></div>
</div>
</div>
</div>
<div id="fline" class="abs"></div>
<div class="abs fbtn nw" style="left:2007px;width:120px">取 消</div>
<div class="abs fbtn nw" style="left:2132px;width:120px">保 存</div>
<div class="abs fbtn nw" style="left:2257px;width:134px">上一步</div>
<div class="abs fbtn nw" style="left:2397px;width:134px">下一步</div>
<svg class="abs" style="left:0;top:0" width="8" height="8"><path d="M0 0h8A8 8 0 0 0 0 8z" fill="#555"/></svg>
<svg class="abs" style="left:2555px;top:0" width="5" height="5"><path d="M5 0H0a5 5 0 0 1 5 5z" fill="#555"/></svg>
<svg class="abs" style="left:0;top:1391px" width="7" height="7"><path d="M0 7h7A7 7 0 0 1 0 0z" fill="#333"/></svg>
<svg class="abs" style="left:2556px;top:1394px" width="4" height="4"><path d="M4 4H0a4 4 0 0 0 4-4z" fill="#333"/></svg>
</div>
</body>
</html>
